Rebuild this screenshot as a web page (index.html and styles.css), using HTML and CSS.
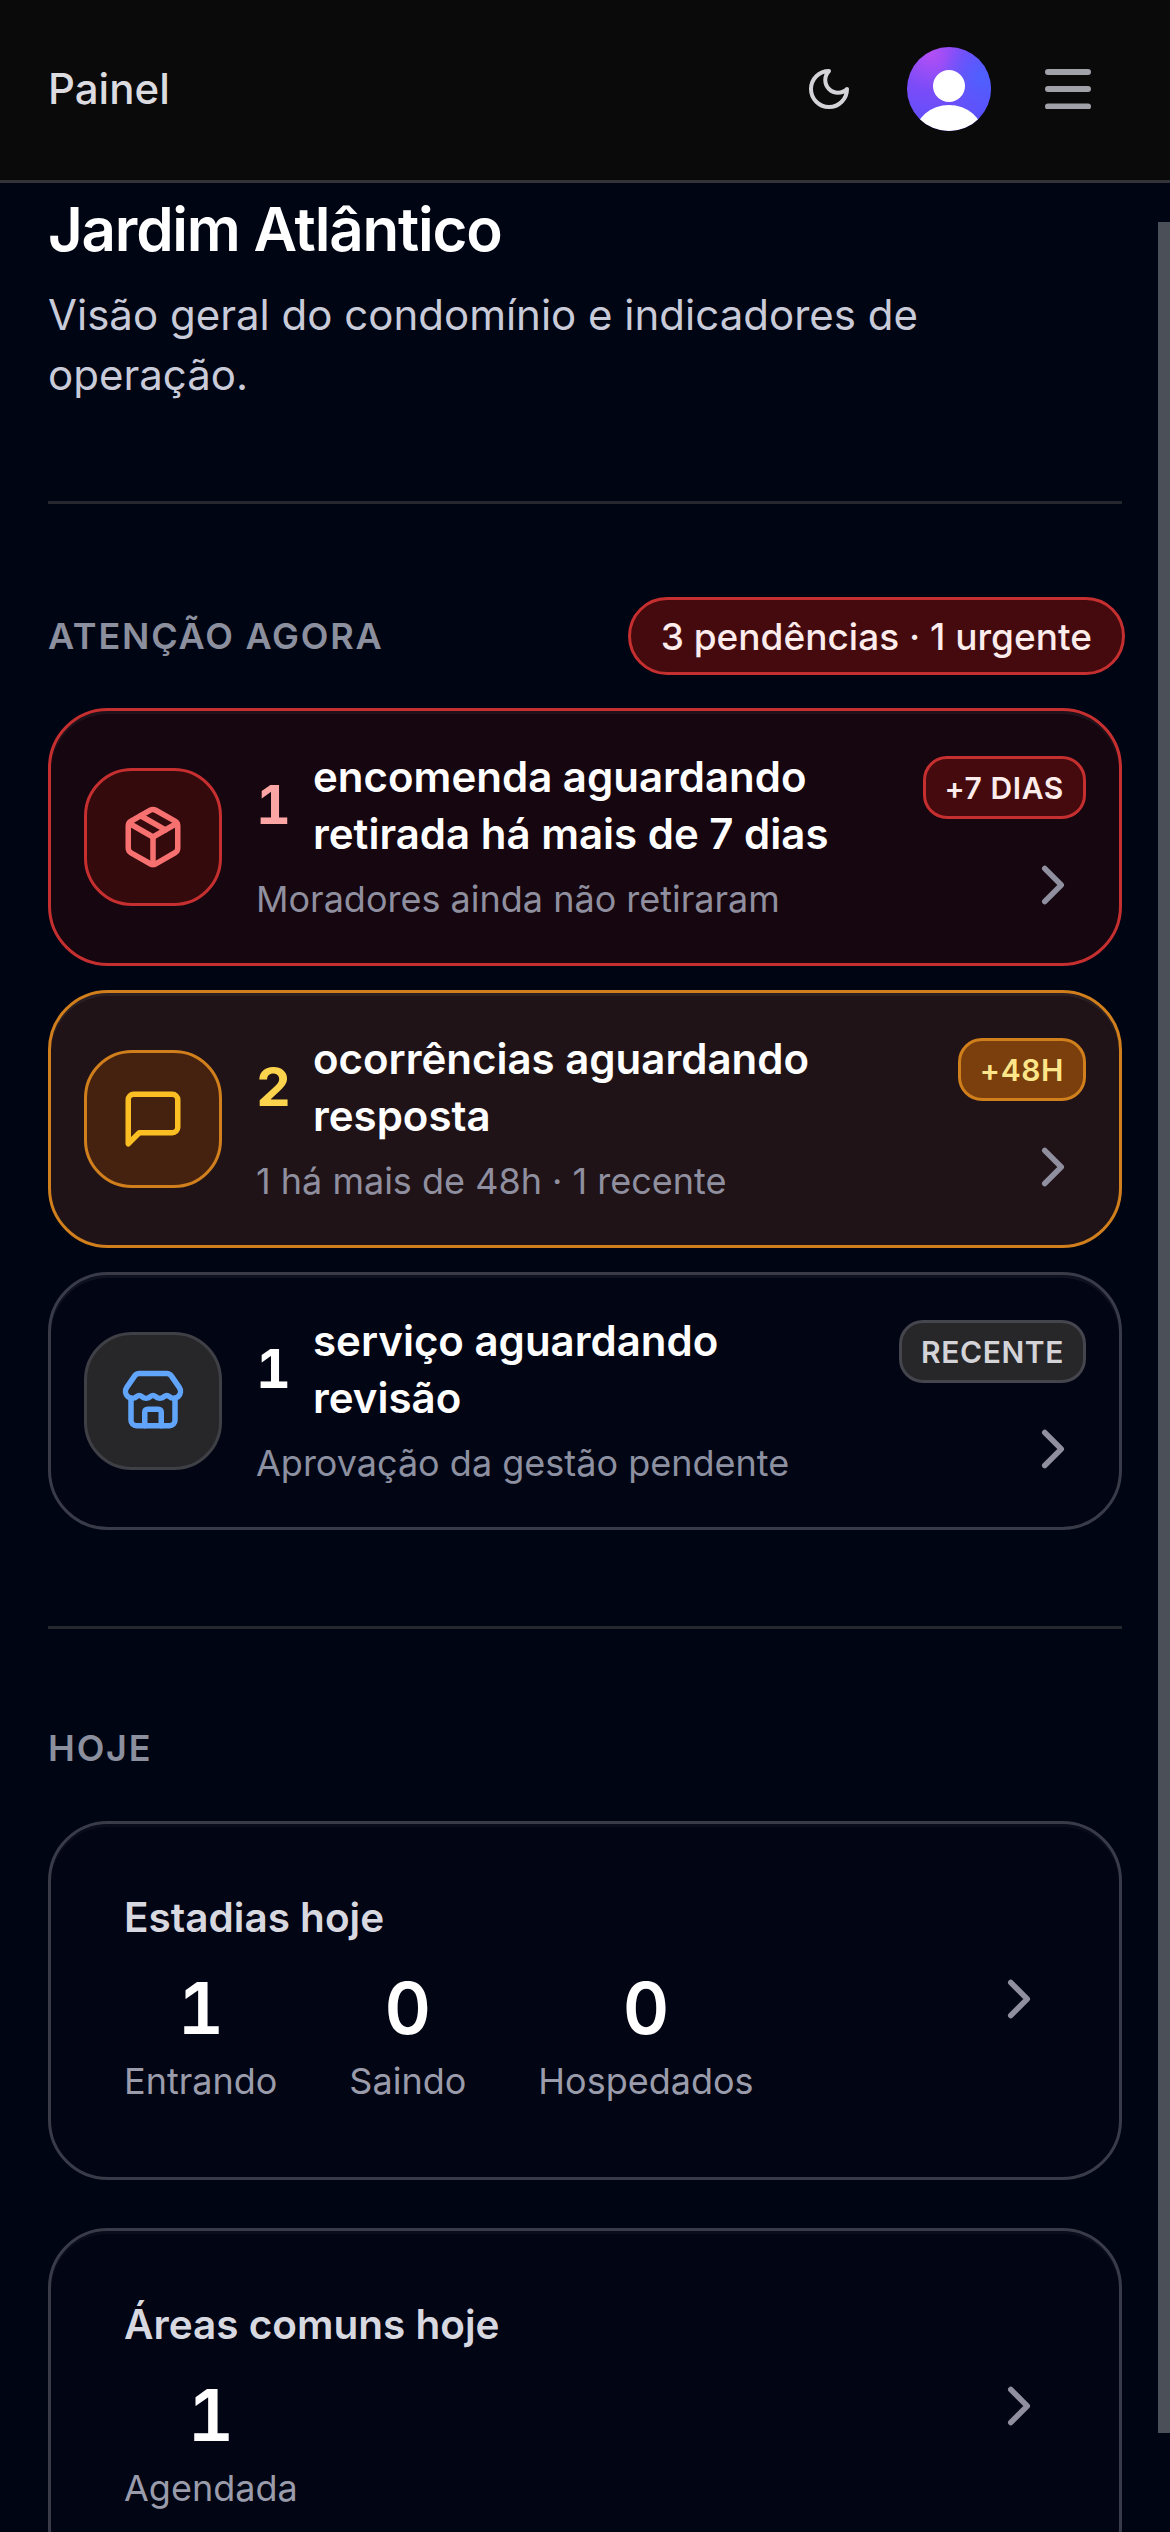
FILE: index.html
```html
<!DOCTYPE html>
<html lang="pt-BR">
<head>
<meta charset="utf-8">
<title>Painel</title>
<link rel="stylesheet" href="styles.css">
</head>
<body>
<header class="topbar">
  <span class="topbar-title">Painel</span>
  <div class="topbar-actions">
    <svg class="icon-moon" viewBox="0 0 24 24"><path d="M12 3a6 6 0 0 0 9 9 9 9 0 1 1-9-9Z"/></svg>
    <svg class="avatar" viewBox="0 0 84 84">
      <defs>
        <radialGradient id="av" cx="0.28" cy="0.08" r="0.95">
          <stop offset="0" stop-color="#b44ff5"/>
          <stop offset="0.45" stop-color="#7a4cf8"/>
          <stop offset="1" stop-color="#5a50fb"/>
        </radialGradient>
        <radialGradient id="av2" cx="0.9" cy="0.35" r="0.5">
          <stop offset="0" stop-color="#4a62ff" stop-opacity="0.9"/>
          <stop offset="1" stop-color="#4a62ff" stop-opacity="0"/>
        </radialGradient>
        <clipPath id="avc"><circle cx="42" cy="42" r="42"/></clipPath>
      </defs>
      <circle cx="42" cy="42" r="42" fill="url(#av)"/>
      <circle cx="42" cy="42" r="42" fill="url(#av2)"/>
      <g clip-path="url(#avc)" fill="#fff">
        <circle cx="42" cy="39" r="16"/>
        <ellipse cx="42" cy="88" rx="34" ry="30"/>
      </g>
    </svg>
    <svg class="icon-menu" viewBox="0 0 46 40"><path d="M3 3h40M3 20h40M3 37.500h40"/></svg>
  </div>
</header>

<main class="page">
  <h1 class="page-title">Jardim Atlântico</h1>
  <p class="page-sub">Visão geral do condomínio e indicadores de operação.</p>
  <hr class="divider divider-first">

  <section>
    <div class="section-head">
      <h2 class="section-label">ATENÇÃO AGORA</h2>
      <span class="summary-pill">3 pendências · 1 urgente</span>
    </div>
    <div class="alert-list">
      <article class="alert alert-red">
        <div class="alert-icon">
          <svg viewBox="0 0 24 24"><path d="M11 21.730a2 2 0 0 0 2 0l7-4A2 2 0 0 0 21 16V8a2 2 0 0 0-1-1.730l-7-4a2 2 0 0 0-2 0l-7 4A2 2 0 0 0 3 8v8a2 2 0 0 0 1 1.730z"/><path d="M12 22V12"/><path d="M3.290 7 12 12l8.710-5"/><path d="m7.500 4.270 9 5.150"/></svg>
        </div>
        <div class="alert-body">
          <div class="alert-head"><span class="alert-count">1</span><span class="alert-title">encomenda aguardando retirada há mais de 7 dias</span></div>
          <p class="alert-sub">Moradores ainda não retiraram</p>
        </div>
        <div class="alert-side">
          <span class="tag">+7 DIAS</span>
          <svg class="chevron" viewBox="0 0 24 24"><path d="m9 18 6-6-6-6"/></svg>
        </div>
      </article>
      <article class="alert alert-amber">
        <div class="alert-icon">
          <svg viewBox="0 0 24 24"><path d="M21 15a2 2 0 0 1-2 2H7l-4 4V5a2 2 0 0 1 2-2h14a2 2 0 0 1 2 2z"/></svg>
        </div>
        <div class="alert-body">
          <div class="alert-head"><span class="alert-count">2</span><span class="alert-title">ocorrências aguardando resposta</span></div>
          <p class="alert-sub">1 há mais de 48h · 1 recente</p>
        </div>
        <div class="alert-side">
          <span class="tag">+48H</span>
          <svg class="chevron" viewBox="0 0 24 24"><path d="m9 18 6-6-6-6"/></svg>
        </div>
      </article>
      <article class="alert alert-gray">
        <div class="alert-icon">
          <svg viewBox="0 0 24 24"><path d="M15 21v-5a1 1 0 0 0-1-1h-4a1 1 0 0 0-1 1v5"/><path d="M17.774 10.310a1.120 1.120 0 0 0-1.549 0 2.500 2.500 0 0 1-3.451 0 1.120 1.120 0 0 0-1.548 0 2.500 2.500 0 0 1-3.452 0 1.120 1.120 0 0 0-1.549 0 2.500 2.500 0 0 1-3.770-3.248l2.889-4.184A2 2 0 0 1 7 2h10a2 2 0 0 1 1.653.873l2.895 4.192a2.500 2.500 0 0 1-3.774 3.244"/><path d="M4 10.950V19a2 2 0 0 0 2 2h12a2 2 0 0 0 2-2v-8.050"/></svg>
        </div>
        <div class="alert-body">
          <div class="alert-head"><span class="alert-count">1</span><span class="alert-title">serviço aguardando revisão</span></div>
          <p class="alert-sub">Aprovação da gestão pendente</p>
        </div>
        <div class="alert-side">
          <span class="tag">RECENTE</span>
          <svg class="chevron" viewBox="0 0 24 24"><path d="m9 18 6-6-6-6"/></svg>
        </div>
      </article>
    </div>
  </section>

  <hr class="divider divider-second">

  <section>
    <h2 class="section-label section-label-today">HOJE</h2>
    <div class="stat-list">
      <article class="stat-card">
        <div class="stat-main">
          <h3 class="stat-title">Estadias hoje</h3>
          <div class="stat-row">
            <div class="stat"><span class="stat-value">1</span><span class="stat-label">Entrando</span></div>
            <div class="stat"><span class="stat-value">0</span><span class="stat-label">Saindo</span></div>
            <div class="stat"><span class="stat-value">0</span><span class="stat-label">Hospedados</span></div>
          </div>
        </div>
        <svg class="chevron" viewBox="0 0 24 24"><path d="m9 18 6-6-6-6"/></svg>
      </article>
      <article class="stat-card">
        <div class="stat-main">
          <h3 class="stat-title">Áreas comuns hoje</h3>
          <div class="stat-row">
            <div class="stat"><span class="stat-value">1</span><span class="stat-label">Agendada</span></div>
          </div>
        </div>
        <svg class="chevron" viewBox="0 0 24 24"><path d="m9 18 6-6-6-6"/></svg>
      </article>
    </div>
  </section>
</main>
<div class="scroll-thumb"></div>
</body>
</html>
```
FILE: styles.css
```css
* { box-sizing: border-box; }
html, body { height: 100%; overflow: hidden; }
body {
  margin: 0;
  background: #000514;
  color: #fff;
  font-family: Inter, "Liberation Sans", sans-serif;
  position: relative;
}
svg { display: block; flex: none; fill: none; stroke-linecap: round; stroke-linejoin: round; }

.topbar {
  height: 183px;
  background: #0a0a0a;
  border-bottom: 3px solid #33343a;
  padding: 0 79px 3px 48px;
  display: flex;
  align-items: center;
  justify-content: space-between;
}
.topbar-title { font-size: 42px; line-height: 60px; font-weight: 500; color: #dcdce0; }
.topbar-actions { display: flex; align-items: center; gap: 54px; }
.icon-moon { width: 48px; height: 48px; stroke: #d4d4d8; stroke-width: 2; }
.avatar { width: 84px; height: 84px; }
.icon-menu { width: 46px; height: 40px; stroke: #a1a1aa; stroke-width: 6; }

.page { padding: 10px 48px 0; }
.page-title { margin: 0; font-size: 60px; line-height: 72px; font-weight: 600; color: #fff; letter-spacing: -1.2px; }
.page-sub { margin: 20px 0 0; font-size: 42px; line-height: 60px; color: #c9cbd9; }

.divider { border: 0; height: 3px; background: #26272f; margin: 0; }
.divider-first { margin-top: 96px; }
.divider-second { margin-top: 96px; }

.section-head { margin-top: 93px; display: flex; align-items: center; justify-content: space-between; }
.section-label { margin: 0; font-size: 36px; line-height: 54px; font-weight: 600; letter-spacing: 1.8px; color: #8c909e; }
.section-label-today { margin-top: 92px; }
.summary-pill {
  height: 78px;
  margin-right: -3px;
  padding: 0 30px;
  display: flex;
  align-items: center;
  border: 3px solid #c62f2f;
  border-radius: 39px;
  background: #450a0d;
  color: #fdecec;
  font-size: 37px;
  font-weight: 500;
}

.alert-list { margin-top: 33px; display: flex; flex-direction: column; gap: 24px; }
.alert {
  height: 258px;
  padding: 0 33px;
  display: flex;
  align-items: center;
  border: 3px solid;
  border-radius: 60px;
  box-shadow: inset 0 3px 0 rgba(255, 255, 255, 0.05);
}
.alert-red { background: #15060f; border-color: #c62f2f; }
.alert-amber { background: #1f1318; border-color: #d07f1c; }
.alert-gray { background: #020514; border-color: #393c48; }

.alert-icon {
  width: 138px;
  height: 138px;
  flex: none;
  display: flex;
  align-items: center;
  justify-content: center;
  border: 3px solid;
  border-radius: 48px;
}
.alert-icon svg { width: 66px; height: 66px; stroke-width: 2; }
.alert-red .alert-icon { background: #340a0c; border-color: #c62f2f; }
.alert-red .alert-icon svg { stroke: #f87171; }
.alert-amber .alert-icon { background: #45220f; border-color: #d07f1c; }
.alert-amber .alert-icon svg { stroke: #fbbf24; }
.alert-gray .alert-icon { background: #27272a; border-color: #3f3f46; }
.alert-gray .alert-icon svg { stroke: #60a5fa; }

.alert-body { flex: 1; min-width: 0; margin-left: 34px; }
.alert-head { display: flex; align-items: center; }
.alert-count { width: 57px; flex: none; font-size: 54px; line-height: 72px; font-weight: 700; font-variant-numeric: tabular-nums; }
.alert-red .alert-count { color: #fca5a5; }
.alert-amber .alert-count { color: #fcd34d; }
.alert-title { font-size: 42px; line-height: 57px; font-weight: 600; color: #fff; }
.alert-sub { margin: 10px 0 0; font-size: 36px; line-height: 54px; color: #8f8f9f; }
.alert-gray .alert-sub { color: #8c90a0; }

.alert-side { align-self: center; margin-left: 30px; display: flex; flex-direction: column; align-items: flex-end; gap: 33px; }
.tag {
  height: 63px;
  padding: 0 19px;
  display: flex;
  align-items: center;
  border: 3px solid;
  border-radius: 24px;
  font-size: 30px;
  font-weight: 600;
  letter-spacing: 0.6px;
  white-space: nowrap;
}
.alert-red .tag { background: #450a0d; border-color: #c62f2f; color: #fdecec; }
.alert-amber .tag { background: #7a3f0c; border-color: #d07f1c; color: #fde68a; }
.alert-gray .tag { background: #27272a; border-color: #45454d; color: #d4d4d8; }

.chevron { width: 66px; height: 66px; stroke: #8f8f9f; stroke-width: 2; }

.stat-list { margin-top: 46px; display: flex; flex-direction: column; gap: 48px; }
.stat-card {
  height: 359px;
  padding: 0 67px 3px 73px;
  display: flex;
  align-items: center;
  border: 3px solid #393c48;
  border-radius: 60px;
  box-shadow: inset 0 3px 0 rgba(255, 255, 255, 0.03);
  background: #020514;
}
.stat-main { flex: 1; }
.stat-title { margin: 0; font-size: 40.500px; line-height: 54px; font-weight: 600; color: #d8d8e0; }
.stat-row { margin-top: 20px; display: flex; gap: 72px; }
.stat { display: flex; flex-direction: column; align-items: center; }
.stat-value { font-size: 72px; line-height: 86px; font-weight: 600; color: #fff; font-variant-numeric: tabular-nums; }
.stat-label { margin-top: 3px; font-size: 36px; line-height: 54px; color: #9a9cab; }

.scroll-thumb { position: absolute; top: 222px; right: 0; width: 12px; height: 2211px; background: #4a4f58; }
```
